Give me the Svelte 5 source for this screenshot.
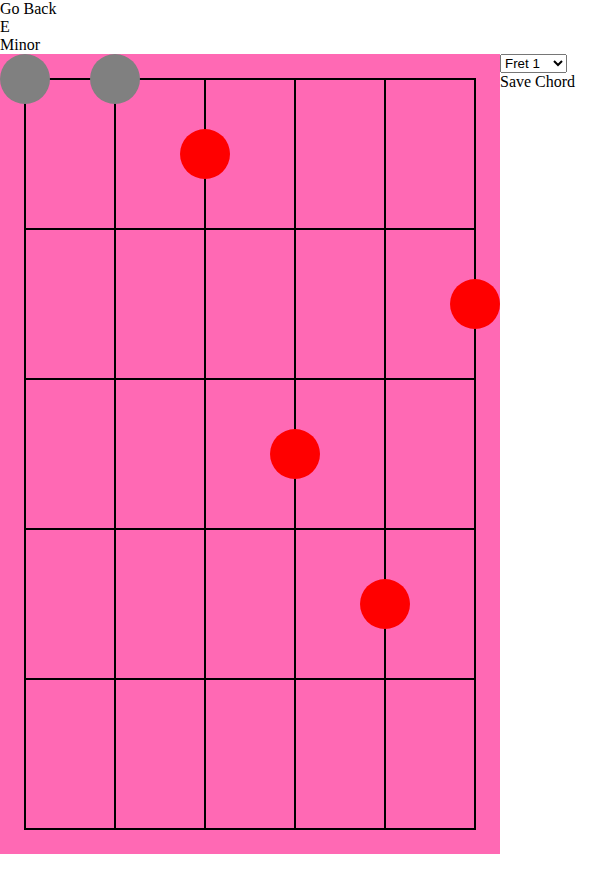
<script>
  const strings = 6;
  const frets = 5;
  const left = 25;
  const top = 25;
  const stringGap = 90;
  const fretGap = 150;

  const xs = Array.from({ length: strings }, (_, i) => left + i * stringGap);
  const ys = Array.from({ length: frets + 1 }, (_, i) => top + i * fretGap);

  let startFret = $state(1);

  const notes = [
    { string: 0, fret: 0 },
    { string: 1, fret: 0 },
    { string: 2, fret: 1 },
    { string: 3, fret: 3 },
    { string: 4, fret: 4 },
    { string: 5, fret: 2 }
  ];

  const noteY = (fret) => (fret === 0 ? top : top + (fret - 1) * fretGap + fretGap / 2);
</script>

<main>
  <a class="link" href="#back">Go Back</a>
  <div>E</div>
  <div>Minor</div>
  <div class="editor">
    <svg class="board" width="500" height="800" viewBox="0 0 500 800" role="img" aria-label="E Minor chord">
      {#each xs as x}
        <line x1={x} y1={ys[0]} x2={x} y2={ys[frets]} />
      {/each}
      {#each ys as y}
        <line x1={xs[0] - 1} y1={y} x2={xs[strings - 1] + 1} y2={y} />
      {/each}
      {#each notes as note}
        <circle class:open={note.fret === 0} cx={xs[note.string]} cy={noteY(note.fret)} r="25" />
      {/each}
    </svg>
    <div class="controls">
      <select aria-label="Starting fret" bind:value={startFret}>
        {#each Array.from({ length: 12 }, (_, i) => i + 1) as n}
          <option value={n}>Fret {n}</option>
        {/each}
      </select>
      <button class="save" type="button">Save Chord</button>
    </div>
  </div>
</main>

<style>
  :global(body) {
    margin: 0;
  }

  main {
    font-family: "Liberation Serif", "Times New Roman", serif;
    font-size: 16px;
    line-height: 18px;
    color: #000;
    background: #fff;
  }

  .link {
    display: block;
    width: fit-content;
    color: inherit;
    text-decoration: none;
  }

  .editor {
    display: flex;
    align-items: flex-start;
  }

  .board {
    display: block;
    flex: none;
    background: hotpink;
  }

  line {
    stroke: #000;
    stroke-width: 2;
  }

  circle {
    fill: red;
  }

  circle.open {
    fill: gray;
  }

  .controls {
    display: flex;
    flex-direction: column;
    align-items: flex-start;
  }

  select {
    width: 67px;
    font-family: "Liberation Sans", Arial, sans-serif;
  }

  .save {
    padding: 0;
    border: 0;
    background: none;
    color: inherit;
    font: inherit;
    cursor: pointer;
  }
</style>
